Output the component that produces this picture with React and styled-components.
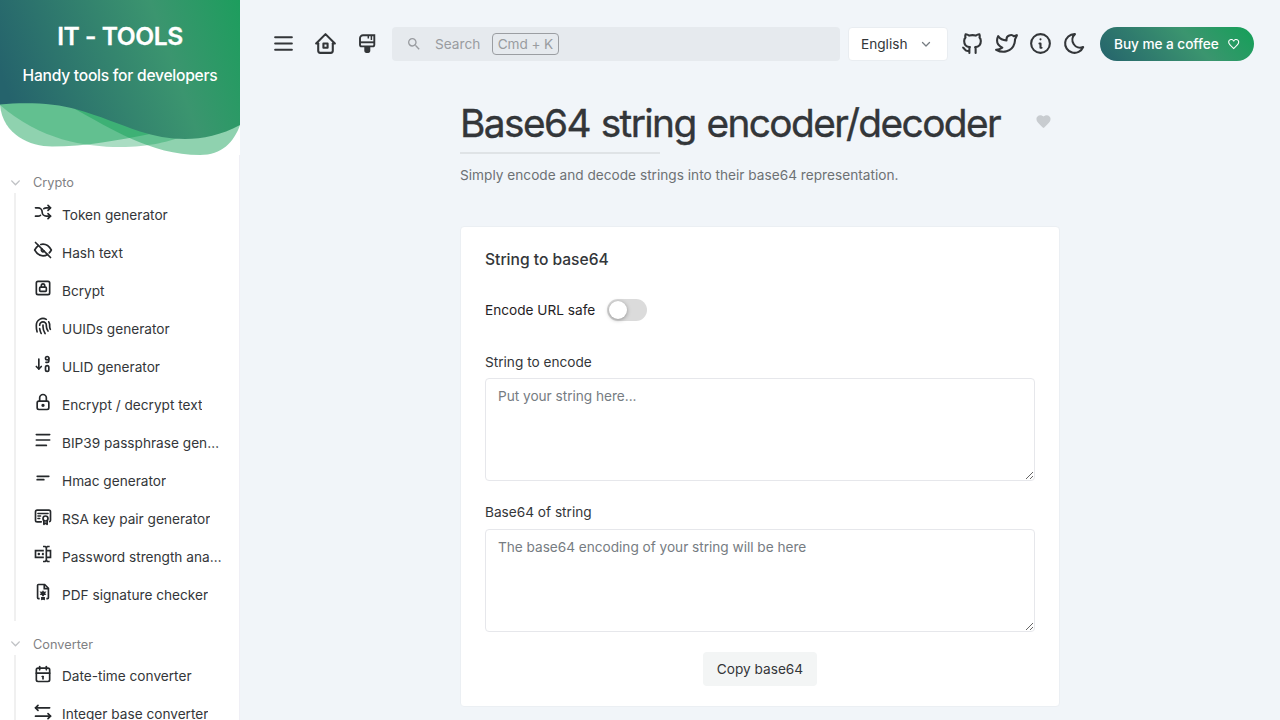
import { useState } from 'react';
import styled, { createGlobalStyle } from 'styled-components';

const GlobalStyle = createGlobalStyle`
  * {
    box-sizing: border-box;
  }

  body {
    margin: 0;
    background-color: #f1f5f9;
    color: #333639;
    font-family: Inter, 'Liberation Sans', sans-serif;
    font-size: 13.65px;
    overflow: hidden;
  }

  button,
  textarea {
    font: inherit;
    color: inherit;
  }
`;

const Layout = styled.div`
  display: flex;
  height: 720px;
  overflow: hidden;
`;

const Sidebar = styled.aside`
  flex: 0 0 240px;
  background-color: #fff;
  overflow: hidden;
`;

const Hero = styled.a`
  position: relative;
  display: block;
  width: 240px;
  height: 155px;
  color: #fff;
  text-align: center;
`;

const HeroWave = styled.svg`
  display: block;
`;

const HeroText = styled.div`
  position: absolute;
  inset: 21px 0 auto;
`;

const HeroTitle = styled.div`
  font-size: 24.6px;
  font-weight: 600;
  line-height: 31px;
  letter-spacing: -0.45px;
  -webkit-text-stroke: 0.3px #fff;
`;

const HeroSubtitle = styled.div`
  margin-top: 14px;
  font-size: 15.6px;
  font-weight: 500;
  line-height: 20px;
  letter-spacing: -0.24px;
`;

const Category = styled.section`
  height: 461.5px;
  padding-top: 17.4px;
  border-right: 1px solid #efeff5;
`;

const CategoryTitle = styled.div`
  display: flex;
  align-items: center;
  gap: 11px;
  height: 20px;
  padding-left: 9px;
  color: #7f8184;
  font-size: 12.75px;

  svg {
    color: #c0c2c5;
  }
`;

const CategoryName = styled.span`
  padding-top: 2px;
  line-height: 20px;
`;

const CategoryItems = styled.div`
  height: 428px;
  margin: 0.9px 0 0 14px;
  padding-top: 2.3px;
  border-left: 2px solid #f0f0f0;
`;

const ToolLink = styled.a`
  display: flex;
  align-items: center;
  gap: 9px;
  height: 38px;
  padding: 0 16px 0 17px;

  svg {
    flex: none;
    margin-top: -5px;
    color: #25282b;
  }
`;

const ToolName = styled.span`
  overflow: hidden;
  white-space: nowrap;
  text-overflow: ellipsis;
  line-height: 20px;
`;

const Main = styled.main`
  flex: 1;
  padding: 27px 26px 0 26.5px;
`;

const TopBar = styled.header`
  display: flex;
  align-items: center;
  gap: 8px;
  height: 34px;
`;

const IconButton = styled.button`
  display: flex;
  align-items: center;
  justify-content: center;
  width: 34px;
  height: 34px;
  padding: 0 0 1px;
  border: 0;
  background: none;
`;

const SearchBar = styled.button`
  flex: 1;
  display: flex;
  align-items: center;
  height: 34px;
  margin-left: -0.5px;
  padding: 0 14px;
  border: 0;
  border-radius: 4px;
  background-color: #e6eaee;
  color: #999ca0;
`;

const SearchLabel = styled.span`
  margin: 0 11.5px 0 13px;
`;

const Shortcut = styled.kbd`
  display: flex;
  align-items: center;
  height: 22px;
  padding: 0 5px;
  border: 1px solid #9b9ea2;
  border-radius: 4px;
  font-family: inherit;
  letter-spacing: -0.12px;
`;

const LanguageSelect = styled.div`
  display: flex;
  align-items: center;
  justify-content: space-between;
  width: 100px;
  height: 34px;
  padding: 0 15px 0 12px;
  border: 1px solid #e9edf1;
  border-radius: 4px;
  background-color: #fff;

  svg {
    color: #767c82;
  }
`;

const ActionButtons = styled.div`
  display: flex;
  margin-left: -1px;
  margin-right: 1px;
`;

const CoffeeButton = styled.a`
  display: flex;
  align-items: center;
  gap: 8px;
  height: 34px;
  width: 154px;
  padding: 0 14px;
  border-radius: 17px;
  background: linear-gradient(48deg, #25636c 0%, #3b956f 60%, #14a058 100%);
  color: #fff;
  font-weight: 500;
  letter-spacing: -0.05px;
  white-space: nowrap;
`;

const ToolContent = styled.div`
  width: 600px;
  margin: 38px 0 0 193.5px;
`;

const ToolHeader = styled.div`
  display: flex;
  align-items: center;
  justify-content: space-between;
  height: 48px;
`;

const Title = styled.h1`
  margin: 0;
  font-size: 38.8px;
  font-weight: 400;
  line-height: 48px;
  letter-spacing: -1.58px;
  word-spacing: 1.4px;
  -webkit-text-stroke: 0.4px currentColor;
  white-space: nowrap;
`;

const FavoriteButton = styled(IconButton)`
  margin-top: -3px;
  color: #c8ccd0;
`;

const Separator = styled.div`
  width: 200px;
  height: 2px;
  margin-top: 5px;
  background-color: #dfe3e6;
`;

const Description = styled.div`
  margin-top: 11px;
  color: #6d7174;
  line-height: 20px;
  letter-spacing: 0.01px;
`;

const Card = styled.div`
  margin-top: 41px;
  height: 481px;
  padding: 23px 24px 0;
  border: 1px solid #ebeff3;
  border-radius: 4px;
  background-color: #fff;
`;

const CardTitle = styled.div`
  font-size: 15.6px;
  font-weight: 500;
  line-height: 20px;
`;

const SwitchRow = styled.div`
  display: flex;
  align-items: center;
  gap: 11.6px;
  height: 22px;
  margin-top: 29px;
  color: #1f2225;
`;

const Track = styled.button`
  width: 40px;
  height: 22px;
  padding: 2px;
  border: 0;
  border-radius: 11px;
  background-color: ${({ $on }) => ($on ? '#18a058' : '#dbdbdb')};
`;

const Thumb = styled.span`
  display: block;
  width: 18px;
  height: 18px;
  margin-left: ${({ $on }) => ($on ? '18px' : '0')};
  border-radius: 9px;
  background-color: #fff;
  box-shadow: 0 1px 4px rgba(0, 0, 0, 0.35);
`;

const Field = styled.label`
  display: block;
  margin-top: ${({ $gap }) => $gap}px;
`;

const FieldLabel = styled.span`
  display: block;
  height: ${({ $height }) => $height}px;
  line-height: 20px;
`;

const TextArea = styled.textarea`
  display: block;
  width: 100%;
  height: 103px;
  padding: 7px 12px;
  border: 1px solid #e6e7eb;
  border-radius: 4px;
  background-color: #fff;
  line-height: 20px;
  letter-spacing: -0.02px;
  resize: vertical;
  outline: 0;

  &::placeholder {
    color: #767c82;
  }
`;

const CopyButton = styled.button`
  display: block;
  width: 114px;
  height: 34px;
  margin: 20px auto 0;
  padding: 0;
  border: 0;
  border-radius: 4px;
  background-color: #f3f5f5;
`;

const LineIcon = ({ size = 20, stroke = 2, paths }) => (
  <svg
    width={size}
    height={size}
    viewBox="0 0 24 24"
    fill="none"
    stroke="currentColor"
    strokeWidth={stroke}
    strokeLinecap="round"
    strokeLinejoin="round"
  >
    {paths.map((d) => (
      <path key={d} d={d} />
    ))}
  </svg>
);

const SolidIcon = ({ size = 20, path }) => (
  <svg width={size} height={size} viewBox="0 0 24 24" fill="currentColor">
    <path d={path} />
  </svg>
);

const BrushIcon = () => (
  <svg width="17" height="20" viewBox="0 0 17 20" fill="none" stroke="currentColor" strokeWidth="1.9">
    <path d="M4 1.2h11.300v9.600a1.600 1.600 0 0 1-1.600 1.600H2.600a1.600 1.600 0 0 1-1.600-1.600V4.200a3 3 0 0 1 3-3z" />
    <path d="M1 8.300h14.300" />
    <path d="M9.300 1v3.600M12.400 1v5" strokeWidth="1.500" />
    <path d="M5.300 12.500h6v4.600a1.800 1.800 0 0 1-1.800 1.800H7.100a1.800 1.800 0 0 1-1.800-1.800z" fill="currentColor" stroke="none" />
  </svg>
);

const FileCertIcon = () => (
  <svg width="20" height="20" viewBox="0 0 24 24" fill="none" stroke="currentColor" strokeWidth="2">
    <path d="M8 20H6.500a1 1 0 0 1-1-1V4a1 1 0 0 1 1-1H14l4.500 4.500V19a1 1 0 0 1-1 1H16" />
    <path d="M13.500 3v5h5" />
    <path d="M12 9.800l1.200 1.800 2.900-.1-1.500 1.900 1.400 1.800-2.300.3L12 17.800l-1.700-2.300-2.300-.3 1.400-1.800-1.500-1.900 2.900.1z" fill="currentColor" stroke="none" />
    <path d="M9.700 18h4.600V22L12 21.300l-2.300.7z" fill="currentColor" stroke="none" />
  </svg>
);

const ICONS = {
  menu: ['M4 6h16', 'M4 12h16', 'M4 18h16'],
  home: [
    'M5 12H3l9-9l9 9h-2',
    'M5 12v7a2 2 0 0 0 2 2h10a2 2 0 0 0 2-2v-7',
    'M10 12h4v4h-4z',
  ],
  github: [
    'M9 19c-4.300 1.400-4.300-2.500-6-3m12 5v-3.500c0-1 .1-1.400-.5-2c2.800-.3 5.500-1.400 5.500-6a4.600 4.600 0 0 0-1.300-3.200a4.200 4.200 0 0 0-.1-3.200s-1.100-.3-3.500 1.300a12.300 12.300 0 0 0-6.200 0C6.500 2.800 5.400 3.100 5.400 3.100a4.200 4.200 0 0 0-.1 3.200A4.600 4.600 0 0 0 4 9.500c0 4.600 2.700 5.700 5.500 6c-.6.6-.6 1.200-.5 2V21',
  ],
  twitter: [
    'M22 4.010c-1 .49-1.980.689-3 .99c-1.121-1.265-2.783-1.335-4.380-.737S11.977 6.323 12 8v1c-3.245.083-6.135-1.395-8-4c0 0-4.182 7.433 4 11c-1.872 1.247-3.739 2.088-6 2c3.308 1.803 6.913 2.423 10.034 1.517c3.580-1.040 6.522-3.723 7.651-7.742a13.840 13.840 0 0 0 .497-3.753c0-.249 1.510-2.772 1.818-4.013z',
  ],
  info: ['M12 3a9 9 0 1 0 0 18a9 9 0 1 0 0-18z', 'M12 8h.01', 'M11 12h1v4h1'],
  moon: ['M12 3c.132 0 .263 0 .393 0a7.500 7.500 0 0 0 7.920 12.446a9 9 0 1 1-8.313-12.454z'],
  chevron: ['M5 9l7 7l7-7'],
  shuffle: [
    'M18 4l3 3l-3 3',
    'M18 20l3-3l-3-3',
    'M3 7h3a5 5 0 0 1 5 5a5 5 0 0 0 5 5h5',
    'M21 7h-5a4.978 4.978 0 0 0-3 1m-4 8a4.984 4.984 0 0 1-3 1H3',
  ],
  eyeOff: [
    'M3 3l18 18',
    'M10.584 10.587a2 2 0 0 0 2.828 2.830',
    'M9.363 5.365A9.466 9.466 0 0 1 12 5c4 0 7.333 2.333 10 7c-.778 1.361-1.612 2.524-2.503 3.488m-2.140 1.861C15.726 18.449 13.942 19 12 19c-4 0-7.333-2.333-10-7c1.369-2.395 2.913-4.175 4.632-5.341',
  ],
  lockSquare: [
    'M6 4h12a2 2 0 0 1 2 2v12a2 2 0 0 1-2 2H6a2 2 0 0 1-2-2V6a2 2 0 0 1 2-2z',
    'M9 11h6a1 1 0 0 1 1 1v3a1 1 0 0 1-1 1H9a1 1 0 0 1-1-1v-3a1 1 0 0 1 1-1z',
    'M10 11V9a2 2 0 1 1 4 0v2',
  ],
  fingerprint: [
    'M18.900 7a8 8 0 0 1 1.100 5v1a6 6 0 0 0 .8 3',
    'M8 11a4 4 0 0 1 8 0v1a10 10 0 0 0 2 6',
    'M12 11v2a14 14 0 0 0 2.500 8',
    'M8 15a18 18 0 0 0 1.800 6',
    'M4.900 19a22 22 0 0 1-.9-7v-1a8 8 0 0 1 12-6.950',
  ],
  sortNumbers: [
    'M4 15l3 3l3-3',
    'M7 6v12',
    'M17 14a2 2 0 0 1 2 2v3a2 2 0 1 1-4 0v-3a2 2 0 0 1 2-2z',
    'M17 3a2 2 0 1 0 0 4a2 2 0 1 0 0-4z',
    'M19 5v3a2 2 0 0 1-2 2h-1.500',
  ],
  lock: [
    'M7 11h10a2 2 0 0 1 2 2v6a2 2 0 0 1-2 2H7a2 2 0 0 1-2-2v-6a2 2 0 0 1 2-2z',
    'M12 15a1 1 0 1 0 0 2a1 1 0 1 0 0-2z',
    'M8 11V7a4 4 0 0 1 8 0v4',
  ],
  textLines: ['M4 5.500h16', 'M4 12h16', 'M4 18.500h12'],
  shortText: ['M5 10h14', 'M5 14h8'],
  certificate: [
    'M15 12a3 3 0 1 0 0 6a3 3 0 1 0 0-6z',
    'M13 17.500V22l2-1.500l2 1.500v-4.500',
    'M10 19H5a2 2 0 0 1-2-2V7c0-1.100.9-2 2-2h14a2 2 0 0 1 2 2v10a2 2 0 0 1-1 1.730',
    'M6 9h12',
    'M6 12h3',
    'M6 15h2',
  ],
  calendar: [
    'M6 5h12a2 2 0 0 1 2 2v12a2 2 0 0 1-2 2H6a2 2 0 0 1-2-2V7a2 2 0 0 1 2-2z',
    'M16 3v4',
    'M8 3v4',
    'M4 11h16',
    'M11 15h1',
    'M12 15v3',
  ],
  arrows: ['M21 17H3', 'M6 10L3 7l3-3', 'M3 7h17', 'M18 20l3-3l-3-3'],
};

const TEXTBOX_PASSWORD =
  'M17,7H22V17H17V19A1,1 0 0,0 18,20H20V22H17.500C16.950,22 16,21.550 16,21C16,21.550 15.050,22 14.500,22H12V20H14A1,1 0 0,0 15,19V5A1,1 0 0,0 14,4H12V2H14.500C15.050,2 16,2.450 16,3C16,2.450 16.950,2 17.500,2H20V4H18A1,1 0 0,0 17,5V7M2,7H13V9H4V15H13V17H2V7M20,15V9H17V15H20M8.500,12A1.500,1.500 0 0,0 7,10.500A1.500,1.500 0 0,0 5.500,12A1.500,1.500 0 0,0 7,13.500A1.500,1.500 0 0,0 8.500,12M13,10.890C12.390,10.330 11.440,10.380 10.880,11C10.320,11.600 10.370,12.550 11,13.110C11.550,13.630 12.430,13.630 13,13.110V10.890Z';

const SEARCH =
  'M15.500 14h-.79l-.28-.27A6.471 6.471 0 0 0 16 9.500 6.500 6.500 0 1 0 9.500 16c1.610 0 3.090-.59 4.230-1.570l.27.28v.79l5 4.990L20.490 19l-4.990-5zm-6 0C7.010 14 5 11.990 5 9.500S7.010 5 9.500 5 14 7.010 14 9.500 11.990 14 9.500 14z';

const HEART =
  'M12 21.350l-1.450-1.320C5.400 15.360 2 12.280 2 8.500 2 5.420 4.420 3 7.500 3c1.740 0 3.410.81 4.500 2.090C13.090 3.810 14.760 3 16.500 3 19.580 3 22 5.420 22 8.500c0 3.780-3.400 6.860-8.550 11.540L12 21.350z';

const HEART_OUTLINE =
  'M12.100 18.550l-.1.100-.11-.1C7.140 14.240 4 11.390 4 8.500 4 6.500 5.500 5 7.500 5c1.540 0 3.040 1 3.570 2.360h1.860C13.460 6 14.960 5 16.500 5c2 0 3.500 1.500 3.500 3.500 0 2.890-3.140 5.740-7.900 10.050M16.500 3c-1.740 0-3.410.81-4.500 2.080C10.910 3.810 9.240 3 7.500 3 4.420 3 2 5.410 2 8.500c0 3.770 3.400 6.860 8.550 11.530L12 21.350l1.450-1.320C18.600 15.360 22 12.270 22 8.500 22 5.410 19.580 3 16.500 3z';

const CATEGORIES = [
  {
    name: 'Crypto',
    tools: [
      { name: 'Token generator', icon: <LineIcon paths={ICONS.shuffle} /> },
      { name: 'Hash text', icon: <LineIcon paths={ICONS.eyeOff} /> },
      { name: 'Bcrypt', icon: <LineIcon paths={ICONS.lockSquare} /> },
      { name: 'UUIDs generator', icon: <LineIcon paths={ICONS.fingerprint} /> },
      { name: 'ULID generator', icon: <LineIcon paths={ICONS.sortNumbers} /> },
      { name: 'Encrypt / decrypt text', icon: <LineIcon paths={ICONS.lock} /> },
      { name: 'BIP39 passphrase generator', icon: <LineIcon paths={ICONS.textLines} /> },
      { name: 'Hmac generator', icon: <LineIcon paths={ICONS.shortText} /> },
      { name: 'RSA key pair generator', icon: <LineIcon paths={ICONS.certificate} /> },
      { name: 'Password strength analyser', icon: <SolidIcon path={TEXTBOX_PASSWORD} /> },
      { name: 'PDF signature checker', icon: <FileCertIcon /> },
    ],
  },
  {
    name: 'Converter',
    tools: [
      { name: 'Date-time converter', icon: <LineIcon paths={ICONS.calendar} /> },
      { name: 'Integer base converter', icon: <LineIcon paths={ICONS.arrows} /> },
    ],
  },
];

const App = () => {
  const [urlSafe, setUrlSafe] = useState(false);

  return (
    <Layout>
      <GlobalStyle />

      <Sidebar>
        <Hero>
          <HeroWave width="240" height="156" viewBox="0 0 240 156">
            <defs>
              <linearGradient id="hero" gradientUnits="userSpaceOnUse" x1="10" y1="100" x2="269.7" y2="7">
                <stop offset="0" stopColor="#25636c" />
                <stop offset="0.6" stopColor="#3b956f" />
                <stop offset="1" stopColor="#14a058" />
              </linearGradient>
            </defs>
            <g fill="#14a058">
              <path opacity="0.48" d="M0 105C3 135 30 146.500 52 146.500C85 146.500 120 140 150 134L175 128V100H0z" />
              <path opacity="0.36" d="M0 105C40 140 85 147 120 147C150 147 170 141 185 136V100H0z" />
              <path opacity="0.48" d="M75 109C110 128 150 154.800 200 155C222 155 234 142 240 125V100H75z" />
            </g>
            <path
              fill="url(#hero)"
              d="M0 0H240V125C205 144 170 141 140 131.500C118 124 100 116 77 109.500C55 103 25 102 0 104.500z"
            />
          </HeroWave>
          <HeroText>
            <HeroTitle>IT - TOOLS</HeroTitle>
            <HeroSubtitle>Handy tools for developers</HeroSubtitle>
          </HeroText>
        </Hero>

        {CATEGORIES.map((category) => (
          <Category key={category.name}>
            <CategoryTitle>
              <LineIcon size={13} stroke={2.6} paths={ICONS.chevron} />
              <CategoryName>{category.name}</CategoryName>
            </CategoryTitle>
            <CategoryItems>
              {category.tools.map((tool) => (
                <ToolLink key={tool.name}>
                  {tool.icon}
                  <ToolName>{tool.name}</ToolName>
                </ToolLink>
              ))}
            </CategoryItems>
          </Category>
        ))}
      </Sidebar>

      <Main>
        <TopBar>
          <IconButton>
            <LineIcon size={25} paths={ICONS.menu} />
          </IconButton>
          <IconButton>
            <LineIcon size={25} paths={ICONS.home} />
          </IconButton>
          <IconButton>
            <BrushIcon />
          </IconButton>

          <SearchBar>
            <SolidIcon size={16} path={SEARCH} />
            <SearchLabel>Search</SearchLabel>
            <Shortcut>Cmd + K</Shortcut>
          </SearchBar>

          <LanguageSelect>
            English
            <LineIcon size={12} stroke={2.6} paths={ICONS.chevron} />
          </LanguageSelect>

          <ActionButtons>
            <IconButton>
              <LineIcon size={25} paths={ICONS.github} />
            </IconButton>
            <IconButton>
              <LineIcon size={25} paths={ICONS.twitter} />
            </IconButton>
            <IconButton>
              <LineIcon size={25} paths={ICONS.info} />
            </IconButton>
            <IconButton>
              <LineIcon size={25} paths={ICONS.moon} />
            </IconButton>
          </ActionButtons>

          <CoffeeButton>
            Buy me a coffee
            <SolidIcon size={14} path={HEART_OUTLINE} />
          </CoffeeButton>
        </TopBar>

        <ToolContent>
          <ToolHeader>
            <Title>Base64 string encoder/decoder</Title>
            <FavoriteButton>
              <SolidIcon size={17} path={HEART} />
            </FavoriteButton>
          </ToolHeader>
          <Separator />
          <Description>Simply encode and decode strings into their base64 representation.</Description>

          <Card>
            <CardTitle>String to base64</CardTitle>

            <SwitchRow>
              Encode URL safe
              <Track $on={urlSafe} onClick={() => setUrlSafe((prev) => !prev)}>
                <Thumb $on={urlSafe} />
              </Track>
            </SwitchRow>

            <Field $gap={31}>
              <FieldLabel $height={26}>String to encode</FieldLabel>
              <TextArea placeholder="Put your string here..." />
            </Field>

            <Field $gap={21}>
              <FieldLabel $height={27}>Base64 of string</FieldLabel>
              <TextArea placeholder="The base64 encoding of your string will be here" readOnly />
            </Field>

            <CopyButton>Copy base64</CopyButton>
          </Card>
        </ToolContent>
      </Main>
    </Layout>
  );
};

export default App;
